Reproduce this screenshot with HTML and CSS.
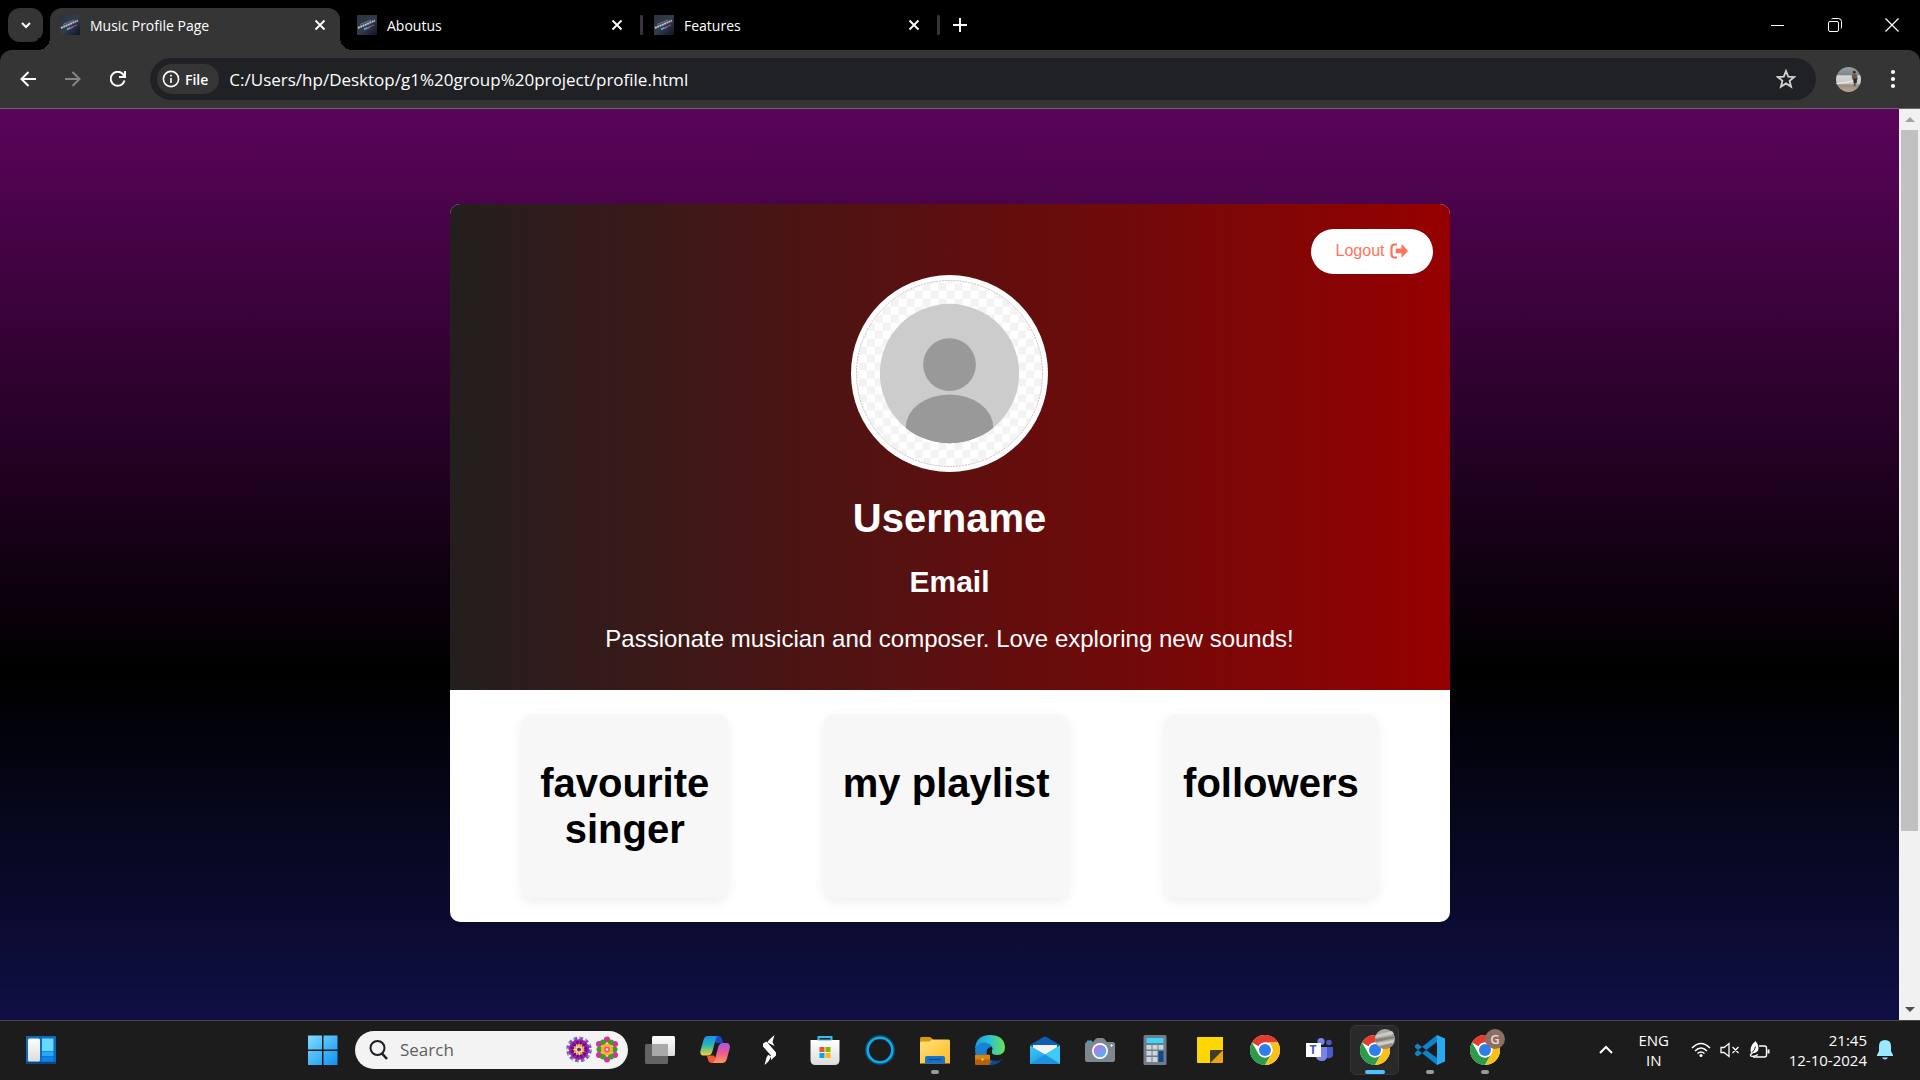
FILE: index.html
```html
<!DOCTYPE html>
<html lang="en">
<head>
<meta charset="utf-8">
<title>Music Profile Page</title>
<link rel="stylesheet" href="styles.css">
</head>
<body>
<svg class="defs" aria-hidden="true">
  <defs>
    <linearGradient id="cover" x1="0" y1="0" x2="1" y2="1"><stop offset="0" stop-color="#2a3142"/><stop offset=".5" stop-color="#343c4c"/><stop offset="1" stop-color="#0f1522"/></linearGradient>
    <linearGradient id="win" x1="0" y1="0" x2="1" y2="1"><stop offset="0" stop-color="#82dcfa"/><stop offset="1" stop-color="#0a92f5"/></linearGradient>
    <linearGradient id="white" x1="0" y1="0" x2="0" y2="1"><stop offset="0" stop-color="#fff"/><stop offset="1" stop-color="#dcdcdc"/></linearGradient>
    <linearGradient id="copA" x1="0" y1="0" x2="0" y2="1"><stop offset="0" stop-color="#1b8ff0"/><stop offset=".45" stop-color="#25b6b0"/><stop offset="1" stop-color="#f2d13c"/></linearGradient>
    <linearGradient id="copB" x1="0" y1="0" x2="0" y2="1"><stop offset="0" stop-color="#a556e8"/><stop offset=".5" stop-color="#ee5a92"/><stop offset="1" stop-color="#fb9a52"/></linearGradient>
    <linearGradient id="folder" x1="0" y1="0" x2="1" y2="1"><stop offset="0" stop-color="#ffe07a"/><stop offset="1" stop-color="#fbbb24"/></linearGradient>
    <linearGradient id="edgeA" x1="0" y1="0" x2="1" y2="0"><stop offset="0" stop-color="#1c9be0"/><stop offset=".5" stop-color="#2cc3d2"/><stop offset="1" stop-color="#6be34c"/></linearGradient>
    <linearGradient id="mail" x1="0" y1="0" x2="1" y2="1"><stop offset="0" stop-color="#3ccbf4"/><stop offset="1" stop-color="#1787dd"/></linearGradient>
    <linearGradient id="lens" x1="0" y1="0" x2="1" y2="1"><stop offset="0" stop-color="#d06be0"/><stop offset="1" stop-color="#3fbdf5"/></linearGradient>
    <linearGradient id="photo" x1="0" y1="0" x2="0" y2="1"><stop offset="0" stop-color="#9b9fa0"/><stop offset=".3" stop-color="#7d8a8c"/><stop offset=".36" stop-color="#d5d6d6"/><stop offset=".66" stop-color="#c5c6c6"/><stop offset=".72" stop-color="#9c8d79"/><stop offset="1" stop-color="#b5a793"/></linearGradient>
    <pattern id="checks" width="16" height="16" patternUnits="userSpaceOnUse"><rect width="16" height="16" fill="#fff"/><path d="M0 0h8v8H0zM8 8h8v8H8z" fill="#f3f3f3"/></pattern>
    <clipPath id="disc"><circle cx="99" cy="99" r="70"/></clipPath>
    <symbol id="favicon" viewBox="0 0 20 20"><rect width="20" height="20" fill="url(#cover)"/><path d="M1 13 18 5.500" stroke="#b9bdc5" stroke-width="2" stroke-dasharray="2 .5"/><path d="M3 9.500 14 5M7 14l10-4" stroke="#7c8594" stroke-width=".8"/><path d="M7 14.500 10 13" stroke="#2cc4dd" stroke-width="1.400"/><path d="M10 13.500 13 12" stroke="#c13fc8" stroke-width="1.400"/></symbol>
    <symbol id="close" viewBox="0 0 12 12"><path d="M1.500 1.500l9 9M10.500 1.500l-9 9" stroke="#fff" stroke-width="1.800"/></symbol>
    <symbol id="chrome" viewBox="0 0 30 30"><circle cx="15" cy="15" r="15" fill="#fff"/><path d="M2 7.500A15 15 0 0 1 28 7.500H15a7.500 7.500 0 0 0-6.500 3.750z" fill="#e33b2e"/><path d="M2 7.500A15 15 0 0 0 15 30l6.500-11.250a7.500 7.500 0 0 1-13 0z" fill="#2c9c4a"/><path d="M28 7.500A15 15 0 0 1 15 30l6.500-11.250A7.500 7.500 0 0 0 21.500 11.250L19 7.500z" fill="#fbc116"/><circle cx="15" cy="15" r="7.500" fill="#fff"/><circle cx="15" cy="15" r="6" fill="#2f7de9"/></symbol>
    <symbol id="beach" viewBox="0 0 26 26"><circle cx="13" cy="13" r="13" fill="url(#photo)"/><path d="M0 17l18-3v1L1 18z" fill="#eee"/><circle cx="19" cy="5.500" r="1.500" fill="#3c2d28"/><path d="M16.500 8l3-1 2.500 1.500.5 4-2 1.500V20h-2v-6l-2-2z" fill="#765447"/><path d="M18 12h4l-.5 5h-3z" fill="#292b32"/></symbol>
    <symbol id="beach-small" viewBox="0 0 20 20"><circle cx="10" cy="10" r="10" fill="#a9a8a4"/><path d="M1 6l16-4 2 3L0 9z" fill="#c9cac8"/><path d="M0 10l20-3v2L1 13z" fill="#7f7f7b"/><path d="M1 14l18-3-1 3L4 17z" fill="#d3cdc2"/><path d="M4 17l14-3q-3 6-8 6-4 0-6-3z" fill="#99897a"/></symbol>
  </defs>
</svg>

<header class="browser">
  <div class="tabstrip">
    <button class="tab-search" aria-label="Search tabs"><svg width="12" height="12" viewBox="0 0 12 12" fill="none" stroke="#fff" stroke-width="2"><path d="M2 4l4 4 4-4"/></svg></button>
    <div class="tab tab-active"><svg class="favicon"><use href="#favicon"/></svg><span class="tab-title">Music Profile Page</span><button class="tab-close" aria-label="Close tab"><svg><use href="#close"/></svg></button></div>
    <div class="tab tab-divided"><svg class="favicon"><use href="#favicon"/></svg><span class="tab-title">Aboutus</span><button class="tab-close" aria-label="Close tab"><svg><use href="#close"/></svg></button></div>
    <div class="tab tab-divided"><svg class="favicon"><use href="#favicon"/></svg><span class="tab-title">Features</span><button class="tab-close" aria-label="Close tab"><svg><use href="#close"/></svg></button></div>
    <button class="new-tab" aria-label="New tab"><svg width="14" height="14" viewBox="0 0 14 14" stroke="#fff" stroke-width="2"><path d="M7 0v14M0 7h14"/></svg></button>
    <div class="window-controls">
      <button aria-label="Minimize"><svg width="14" height="14" viewBox="0 0 14 14" stroke="#fff" stroke-width="1"><path d="M0 7.500h13"/></svg></button>
      <button aria-label="Restore"><svg width="14" height="14" viewBox="0 0 14 14" fill="none" stroke="#fff"><rect x=".5" y="3.500" width="10" height="10" rx="1.500"/><path d="M3.500 1Q4 .5 5 .5h5.500q3 0 3 3V9q0 1-.5 1.500"/></svg></button>
      <button aria-label="Close"><svg width="14" height="14" viewBox="0 0 14 14" stroke="#fff" stroke-width="1.200"><path d="M.5.5l13 13M13.500.5l-13 13"/></svg></button>
    </div>
  </div>
  <div class="toolbar">
    <button class="nav" aria-label="Back"><svg width="16" height="16" viewBox="0 0 16 16" fill="none" stroke="#fff" stroke-width="2"><path d="M16 8H2M8.500 1 1.500 8l7 7"/></svg></button>
    <button class="nav" aria-label="Forward"><svg width="16" height="16" viewBox="0 0 16 16" fill="none" stroke="#868686" stroke-width="2"><path d="M0 8h14M7.500 1l7 7-7 7"/></svg></button>
    <button class="nav" aria-label="Reload"><svg width="16" height="16" viewBox="0 0 16 16" fill="none" stroke="#fff" stroke-width="2"><path d="M14.500 9.500A7 7 0 1 1 12.800 3L15 5.500"/><path d="M15 0v6H9"/></svg></button>
    <div class="omnibox">
      <button class="chip"><svg width="18" height="18" viewBox="0 0 18 18" fill="none" stroke="#fff" stroke-width="1.600"><circle cx="9" cy="9" r="7.600"/><path d="M9 8v5M9 4.800v1.800"/></svg>File</button>
      <input class="url" type="text" aria-label="Address" value="C:/Users/hp/Desktop/g1%20group%20project/profile.html">
      <button class="star" aria-label="Bookmark"><svg width="20" height="20" viewBox="0 0 20 20" fill="none" stroke="#d0d2d4" stroke-width="1.800"><path d="M10 2l2.200 5.600 6 .4-4.600 3.900 1.500 5.800L10 14.400l-5.100 3.300 1.500-5.800L1.800 8l6-.4z"/></svg></button>
    </div>
    <button class="profile" aria-label="Profile"><svg width="25" height="25"><use href="#beach"/></svg></button>
    <button class="menu" aria-label="Menu"><svg width="6" height="20" viewBox="0 0 6 20" fill="#fff"><circle cx="3" cy="3" r="2.100"/><circle cx="3" cy="10" r="2.100"/><circle cx="3" cy="17" r="2.100"/></svg></button>
  </div>
</header>

<div class="viewport">
  <main class="page">
    <article class="card">
      <section class="hero">
        <a class="logout" href="#">Logout <svg width="18" height="16" viewBox="0 0 18 16"><path d="M7 1.500H4.500a3 3 0 0 0-3 3v7a3 3 0 0 0 3 3H7" fill="none" stroke="#ff7359" stroke-width="2.200"/><path d="M6.500 5.500h5V2.200q0-1 .9-.4l5 5.400q.6.800 0 1.500l-5 5.200q-.9.600-.9-.4v-3.200h-5q-.8 0-.8-.8V6.300q0-.8.800-.8z" fill="#ff7359"/></svg></a>
        <svg class="avatar" viewBox="0 0 198 198" role="img" aria-label="Profile picture">
          <circle cx="99" cy="99" r="99" fill="#fff"/>
          <circle cx="99" cy="99" r="93" fill="url(#checks)"/>
          <circle cx="99" cy="99" r="93.500" fill="none" stroke="#c9a9a9" stroke-width=".8" stroke-dasharray="2 1"/>
          <circle cx="99" cy="99" r="70" fill="#ccc"/>
          <g clip-path="url(#disc)" fill="#999"><circle cx="99" cy="90" r="26.500"/><ellipse cx="99" cy="153" rx="44" ry="33"/><path d="M55 153h88v20H55z"/></g>
        </svg>
        <h1 class="heading username">Username</h1>
        <h2 class="email">Email</h2>
        <p class="bio">Passionate musician and composer. Love exploring new sounds!</p>
      </section>
      <section class="stats">
        <div class="stat"><h1 class="heading">favourite<br>singer</h1></div>
        <div class="stat"><h1 class="heading">my playlist</h1></div>
        <div class="stat"><h1 class="heading">followers</h1></div>
      </section>
    </article>
  </main>
  <div class="scrollbar" aria-hidden="true">
    <span class="arrow arrow-up"></span>
    <div class="track"><div class="thumb"></div></div>
    <span class="arrow arrow-down"></span>
  </div>
</div>

<footer class="taskbar">
  <div class="task-left"><button class="widgets" aria-label="Widgets"><svg width="30" height="28" viewBox="0 0 30 28"><rect width="30" height="28" rx="1" fill="#0a6bbf"/><path d="M0 26h30v2H0z" fill="#0b4680"/><rect x="2" y="2.500" width="12" height="23" rx="1.500" fill="url(#white)"/><path d="M16 2.500h11.500V15H16z" fill="#69d8ff"/><path d="M16 15.500h11.500V20H16z" fill="#2aa6f4"/><path d="M16 20.500h11.500v5H16z" fill="#0a83ea"/></svg></button></div>
  <nav class="task-apps">
    <button class="app" aria-label="Start"><svg viewBox="0 0 30 30" fill="url(#win)"><path d="M0 1q0-.5.500-.5H14v14H0zM15.500.5h14v14h-14zM0 16h14v14H.5Q0 30 0 29.500zM15.500 16h14v14h-14z"/></svg></button>
    <label class="search"><svg width="20" height="20" viewBox="0 0 20 20" fill="none" stroke="#1e1f22" stroke-width="2"><circle cx="8.500" cy="8" r="7"/><path d="M13 13.500l5 5.500" stroke-width="2.600"/></svg><input type="text" placeholder="Search" aria-label="Search">
      <svg width="54" height="27" viewBox="0 0 54 27"><g fill="none"><circle cx="13" cy="13.500" r="10.800" stroke="#5464ea" stroke-width="4" stroke-dasharray="3.600 2.055"/><circle cx="13" cy="13.500" r="12" stroke="#f3a92b" stroke-width="2" stroke-dasharray="1.500 4.783"/><circle cx="13" cy="13.500" r="8" stroke="#b11aa5" stroke-width="4.500"/><circle cx="13" cy="13.500" r="6.500" stroke="#571486" stroke-width="4" stroke-dasharray="2 1.400"/><circle cx="13" cy="13.500" r="4" stroke="#f7a90f" stroke-width="2.500" stroke-dasharray="2.200 .94"/></g><circle cx="13" cy="13.500" r="2" fill="#7a1c79"/><g fill="#dc2ba6"><circle cx="41" cy="3.500" r="3"/><circle cx="41" cy="23.500" r="3"/><circle cx="33" cy="8" r="3"/><circle cx="49" cy="8" r="3"/><circle cx="33" cy="19" r="3"/><circle cx="49" cy="19" r="3"/></g><g fill="#3f9d21"><circle cx="37" cy="6.500" r="3"/><circle cx="45" cy="6.500" r="3"/><circle cx="33.500" cy="13.500" r="3"/><circle cx="48.500" cy="13.500" r="3"/><circle cx="37" cy="20.500" r="3"/><circle cx="45" cy="20.500" r="3"/></g><circle cx="41" cy="13.500" r="6" fill="#f6b51e"/><circle cx="41" cy="13.500" r="3" fill="#f24f9b"/><circle cx="41" cy="13.500" r="1.200" fill="#ffd9e8"/></svg></label>
    <button class="app" aria-label="Task view"><svg viewBox="0 0 30 30"><rect x="0" y="9" width="23" height="20" rx="1.500" fill="#636363"/><rect x="7" y="1" width="23" height="20" rx="1.500" fill="url(#white)"/><path d="M7 9h16v12H8.500Q7 21 7 19.500z" fill="#a9a9a9"/></svg></button>
    <button class="app" aria-label="Copilot"><svg viewBox="0 0 30 30"><path d="M12 1h7q2 0 3 3l1 4h-7z" fill="#1b49c6"/><path d="M8 1h10q-1.500 0-2.500 4l-3 11q-1 4.500-5 4.500H4q-4.500 0-3.500-5L3.500 5Q4.500 1 8 1z" fill="url(#copA)"/><path d="M18 28h-7q-2 0-3-3l-1-4.500h7z" fill="#f4582f"/><path d="M22 28H12.500q1.500 0 2.500-4l3-11q1-5 5-5h3.500q4 0 3.300 5l-3 11q-1 4-4.800 4z" fill="url(#copB)"/></svg></button>
    <button class="app" aria-label="S"><svg viewBox="0 0 30 30" fill="#fff"><path d="M19.500 0 17.500 7l2 4-7-3.500Q13 5.500 15 4zM8 8.500l3.500-2L21 17.500v3L16 25v-4.500L8 11.500zM9.500 30l2-7.500 1.500-2.500 3 1Q15 26 9.500 30z"/></svg></button>
    <button class="app" aria-label="Microsoft Store"><svg viewBox="0 0 30 30"><path d="M8.500 7V2h13v5" fill="none" stroke="#31bdee" stroke-width="2"/><path d="M.5 5h29v20q0 5-5 5h-19q-5 0-5-5z" fill="url(#white)"/><path d="M9.500 12h5v5h-5z" fill="#f25022"/><path d="M15.500 12h5v5h-5z" fill="#7fba00"/><path d="M9.500 18h5v5h-5z" fill="#00a4ef"/><path d="M15.500 18h5v5h-5z" fill="#ffb900"/><path d="M7.500 5h14" stroke="#31bdee" stroke-width="1"/></svg></button>
    <button class="app" aria-label="Cortana"><svg viewBox="0 0 30 30" fill="none"><circle cx="15" cy="15" r="13.500" stroke="#0c4d6e" stroke-width="3"/><circle cx="15" cy="15" r="12.300" stroke="#0ea9ee" stroke-width="2.600"/></svg></button>
    <button class="app app-open" aria-label="File Explorer"><svg viewBox="0 0 30 30"><path d="M0 3.500Q0 2 1.500 2h8q1 0 2 1l2 2v5H0z" fill="#d9960f"/><path d="M0 8q0-1.500 1.500-1.500h8L12 4.500h16.500q1.500 0 1.500 1.500v22.500H0z" fill="url(#folder)"/><path d="M5 28.500V23q0-2 2-2h16q2 0 2 2v5.500z" fill="#1573c9"/><path d="M9 24.500h12" stroke="#0b4c92" stroke-width="1.200"/></svg></button>
    <button class="app" aria-label="Edge"><svg viewBox="0 0 30 30"><path d="M11 18q2 8 10 8 5 0 7-3-4 7-12 7-6 0-9-5z" fill="#0e4a92"/><path d="M0 14Q1 0 15 0q14 0 15 12 0 8-8 8-6 0-5-4 2-5-4-7Q4 7 0 14z" fill="url(#edgeA)"/><path d="M0 15Q2 7 10 7.500q6 1 7 4.500-5 0-5.500 5 0 6 5.500 10-4 3-10 0Q0 24 0 15z" fill="#1683d8"/><rect x="0" y="19.500" width="15" height="10.500" rx="1" fill="#b4610c"/><path d="M0 20h15v4.500H0z" fill="#d8830f"/><path d="M6.500 23.500h2v2h-2z" fill="#ffd25a"/></svg></button>
    <button class="app" aria-label="Mail"><svg viewBox="0 0 30 30"><path d="M0 10 13.500 2q1.500-1 3 0L30 10v8H0z" fill="#0c5eb0"/><path d="M3 10h24v8l-12 4-12-4z" fill="#f3f3f3"/><path d="M0 10.500l15 9 15-9V29H0z" fill="url(#mail)"/><path d="M15 19.500 30 10.500V29z" fill="#3ccbf4"/><path d="M0 29 15 19.500 30 29z" fill="#1f93e0"/></svg></button>
    <button class="app" aria-label="Camera"><svg viewBox="0 0 30 30"><path d="M2 5.500h5V8H2z" fill="#2fa8ea"/><path d="M0 9q0-2 2-2h6l2.500-3q1-1 2-1h5q1 0 2 1L22 7h6q2 0 2 2v16q0 2-2 2H2q-2 0-2-2z" fill="#7d8790"/><circle cx="15" cy="16" r="8" fill="#fff"/><circle cx="15" cy="16" r="6.300" fill="url(#lens)"/><path d="M26.500 9v3M25 10.500h3" stroke="#d9dde1"/></svg></button>
    <button class="app" aria-label="Calculator"><svg viewBox="0 0 30 30"><rect x="3.500" width="23" height="30" rx="1.500" fill="#717d89"/><path d="M6.500 3h17v5h-17z" fill="#3fd5fb"/><path d="M6.500 10h5v4.500h-5zM12.500 10h5v4.500h-5zM18.500 10h5v4.500h-5zM6.500 16h5v4.500h-5zM12.500 16h5v4.500h-5zM6.500 22h5v5h-5zM12.500 22h5v5h-5z" fill="#cdd6df"/><path d="M18.500 16h5v11h-5z" fill="#0f4a90"/></svg></button>
    <button class="app" aria-label="Sticky Notes"><svg viewBox="0 0 30 30"><path d="M3 2h25v13L15 28H3q-1 0-1-1V3q0-1 1-1z" fill="#ffd700"/><path d="M15 28h12q1 0 1-1V15z" fill="#e8a50d"/><path d="M15 28V16q0-1 1-1h12z" fill="#3d3b35"/></svg></button>
    <button class="app" aria-label="Chrome"><svg><use href="#chrome"/></svg></button>
    <button class="app" aria-label="Teams"><svg viewBox="0 0 30 30"><circle cx="24" cy="7.500" r="2.800" fill="#5059c9"/><path d="M18 12h10v8q-1 4-6 3z" fill="#5059c9"/><circle cx="16" cy="6.500" r="3.600" fill="#7b83eb"/><path d="M10 12h12v9q0 5-5 5t-6-4z" fill="#7b83eb"/><rect x="1" y="8" width="15" height="14" fill="#fff"/><text x="8" y="19" class="teams-letter">T</text></svg></button>
    <button class="app app-active" aria-label="Chrome window"><svg><use href="#chrome"/></svg><span class="badge"><svg width="20" height="20"><use href="#beach-small"/></svg></span></button>
    <button class="app app-open" aria-label="Visual Studio Code"><svg viewBox="0 0 30 30"><path d="M0 10.500 2.500 8.500 22 23v7L0 12.500zM0 19.500l2.500 2L22 7V0L0 17.500z" fill="#0a84cc"/><path d="M22 0l8 3.500v23L22 30z" fill="#29a9f2"/></svg></button>
    <button class="app app-open" aria-label="Chrome profile G"><svg><use href="#chrome"/></svg><span class="badge badge-letter">G</span></button>
  </nav>
  <div class="tray">
    <button class="tray-up" aria-label="Hidden icons"><svg width="14" height="9" viewBox="0 0 14 9" fill="none" stroke="#fff" stroke-width="2"><path d="M1 8l6-6 6 6"/></svg></button>
    <button class="tray-text lang">ENG<br>IN</button>
    <button class="status" aria-label="Network, sound, battery">
      <svg width="20" height="16" viewBox="0 0 20 16" fill="none" stroke="#fff" stroke-width="1.500"><path d="M1 6Q10-3 19 6M4 9q6-6 12 0M6.500 11.500q3.500-3 7 0"/><circle cx="10" cy="13.500" r="1.500" fill="#fff" stroke="none"/></svg>
      <svg width="20" height="16" viewBox="0 0 20 16" fill="none" stroke="#fff" stroke-width="1.300"><path d="M1 5.500h3L9 1.500v13L4 10.500H1zM12.500 5l6 6M18.500 5l-6 6"/></svg>
      <svg width="21" height="18" viewBox="0 0 21 18"><path d="M10 5h5.500q2 0 2 2v7q0 2-2 2H4" fill="none" stroke="#fff" stroke-width="1.400"/><path d="M18.500 8.500h2v4h-2z" fill="#fff"/><path d="M6.500 0q3 3 3 7t-4 5H2q-1-3 0-6 1-3 4.500-6z" fill="#fff"/><path d="M7 6Q6 10 1 14M1 14.500q3 2 8-1" fill="none" stroke="#fff" stroke-width="1.200"/><path d="M6.500 5.500Q6 9 3 11.500" fill="none" stroke="#1c1c1c"/></svg>
    </button>
    <button class="tray-text clock">21:45<br>12-10-2024</button>
    <button class="bell" aria-label="Notifications"><svg width="16" height="20" viewBox="0 0 16 20" fill="#98e8ff"><path d="M8 0q6 0 6 6v5l2 4v1H0v-1l2-4V6q0-6 6-6zM5 17.500h6q-1 2-3 2t-3-2z"/></svg></button>
  </div>
</footer>
</body>
</html>
```
FILE: styles.css
```css
* { box-sizing: border-box; }
html, body { height: 100%; margin: 0; }
body {
  display: flex;
  flex-direction: column;
  overflow: hidden;
  background: #000;
  color: #fff;
  font-family: "Open Sans", "Noto Sans", sans-serif;
}
button { padding: 0; border: 0; background: none; color: inherit; font: inherit; }
button, .search, .chip { display: flex; align-items: center; justify-content: center; }
svg { display: block; flex: none; }
.defs { position: absolute; width: 0; height: 0; }

/* Browser window */
.browser { flex: none; background: #000; }
.tabstrip { display: flex; height: 50px; padding: 8px 0 0 8px; }
.tab-search { width: 35px; height: 34px; margin-right: 7px; border-radius: 12px; background: #353535; }
.tab {
  position: relative;
  display: flex;
  align-items: center;
  width: 290px;
  height: 34px;
  margin-right: 7px;
  padding: 0 12px 0 10px;
  font-size: 14px;
}
.tab-active { height: 42px; padding-bottom: 8px; border-radius: 12px 12px 0 0; background: #353535; }
.tab-active::before, .tab-active::after {
  content: "";
  position: absolute;
  bottom: 0;
  width: 12px;
  height: 12px;
}
.tab-active::before { right: 100%; background: radial-gradient(circle at 0 0, #000 12px, #353535 12px); }
.tab-active::after { left: 100%; background: radial-gradient(circle at 100% 0, #000 12px, #353535 12px); }
.tab-divided::after {
  content: "";
  position: absolute;
  left: 100%;
  width: 3px;
  height: 20px;
  margin-left: 3px;
  border-radius: 1px;
  background: #353535;
}
.favicon { width: 20px; height: 20px; margin-right: 10px; }
.tab-title { flex: 1; white-space: nowrap; }
.tab-close { width: 16px; height: 16px; }
.tab-close svg { width: 12px; height: 12px; }
.new-tab { width: 38px; height: 34px; }
.window-controls { display: flex; margin-left: auto; }
.window-controls button { width: 57px; height: 34px; }

.toolbar {
  display: flex;
  align-items: center;
  height: 59px;
  padding: 0 11px 0 5px;
  border-bottom: 1px solid #686868;
  border-radius: 12px 12px 0 0;
  background: #353535;
}
.nav { width: 45px; height: 42px; }
.omnibox {
  display: flex;
  flex: 1;
  align-items: center;
  height: 42px;
  margin: 0 11px 0 10px;
  padding: 0 20px 0 7px;
  border-radius: 21px;
  background: #202124;
}
.chip { gap: 5px; height: 30px; padding: 0 11px 0 5px; border-radius: 15px; background: #353535; font-size: 14px; font-weight: 600; }
.url { flex: 1; min-width: 0; padding: 0 0 0 10px; border: 0; outline: 0; background: none; color: #fff; font: 17px "Open Sans", "Noto Sans", sans-serif; }
.profile { width: 42px; height: 42px; }
.menu { width: 32px; height: 42px; margin-left: 8px; }

/* Profile page */
.viewport { display: flex; flex: 1; min-height: 0; }
.page {
  flex: 1;
  padding: 95px 20px;
  overflow: hidden;
  background: linear-gradient(#5a045a, #000 50%, #191970) 0 0 / 100% 124%;
  font-family: "Liberation Sans", Arial, sans-serif;
}
.card { max-width: 1000px; margin: 0 auto; overflow: hidden; border-radius: 10px; background: #fff; }
.hero {
  display: flex;
  flex-direction: column;
  align-items: center;
  padding: 25px 17px 37px;
  background: linear-gradient(90deg, #231f1e, #960000);
}
.logout {
  display: flex;
  align-items: center;
  align-self: flex-end;
  gap: 5px;
  height: 45px;
  padding: 0 25px 2px;
  border-radius: 25px;
  background: #fff;
  color: #ff7359;
  font-size: 16px;
  text-decoration: none;
}
.avatar { width: 197px; height: 197px; margin-top: 1px; }
.heading { margin: 0; font-size: 40px; line-height: 46px; }
.username { margin-top: 23px; }
.email { margin: 24px 0 0; font-size: 30px; line-height: 34px; }
.bio { margin: 26px 0 0; font-size: 24px; line-height: 28px; }
.stats { display: flex; justify-content: space-around; padding: 24px; }
.stat {
  padding: 46px 19px;
  border-radius: 12px;
  background: #f7f7f7;
  box-shadow: 0 4px 12px rgba(0, 0, 0, .07);
  color: #000;
  text-align: center;
}

.scrollbar { display: flex; flex-direction: column; width: 21px; background: #f1f1f1; }
.arrow { display: grid; place-items: center; height: 21px; }
.arrow::before { content: ""; border: 5px solid transparent; }
.arrow-up::before { border-top: 0; border-bottom-color: #a3a3a3; }
.arrow-down::before { border-bottom: 0; border-top-color: #505050; }
.track { flex: 1; padding: 0 2px; }
.thumb { height: calc(100% / 1.24); background: #c1c1c1; }

/* Taskbar */
.taskbar { display: flex; flex: none; height: 60px; border-top: 1px solid #484848; background: #1c1c1c; }
.task-left { display: flex; flex: 1; }
.widgets { margin: 0 0 2px 26px; }
.task-apps { display: flex; align-items: center; }
.app { position: relative; width: 55px; height: 100%; padding-bottom: 2px; }
.app > svg { width: 30px; height: 30px; }
.search { gap: 11px; width: 273px; height: 38px; margin: 0 4px 2px 5px; padding: 0 8px 0 14px; border-radius: 19px; background: #f3f3f3; }
.search input { flex: 1; min-width: 0; padding: 0; border: 0; outline: 0; background: none; font: 17px "Open Sans", "Noto Sans", sans-serif; }
.search input::placeholder { color: #5f5f5f; opacity: 1; }
.app-open::after, .app-active::after {
  content: "";
  position: absolute;
  bottom: 6px;
  width: 8px;
  height: 4px;
  border-radius: 2px;
  background: #9a9a9a;
}
.app-active::after { width: 20px; background: #4cc2ff; }
.app-active::before {
  content: "";
  position: absolute;
  inset: 4px 3px 5px;
  border: 1px solid #363636;
  border-radius: 6px;
  background: #292929;
}
.app-active > svg { position: relative; }
.badge { position: absolute; top: 8px; right: 7px; width: 20px; height: 20px; border-radius: 50%; }
.badge-letter { background: #8d6e63; color: #e8dcd7; font-size: 13px; font-weight: 600; line-height: 20px; text-align: center; }
.teams-letter { fill: #4b53bc; font: bold 12px "Open Sans", sans-serif; text-anchor: middle; }
.tray { display: flex; flex: 0 0 408px; justify-content: flex-end; padding: 0 27px 2px 0; }
.tray-up { width: 30px; margin-right: 8px; }
.tray-text { font-size: 15px; line-height: 20px; }
.lang { width: 50px; text-align: center; }
.status { gap: 9px; margin: 0 19px 0 12px; }
.clock { text-align: right; }
.bell { margin-left: 10px; }
```
